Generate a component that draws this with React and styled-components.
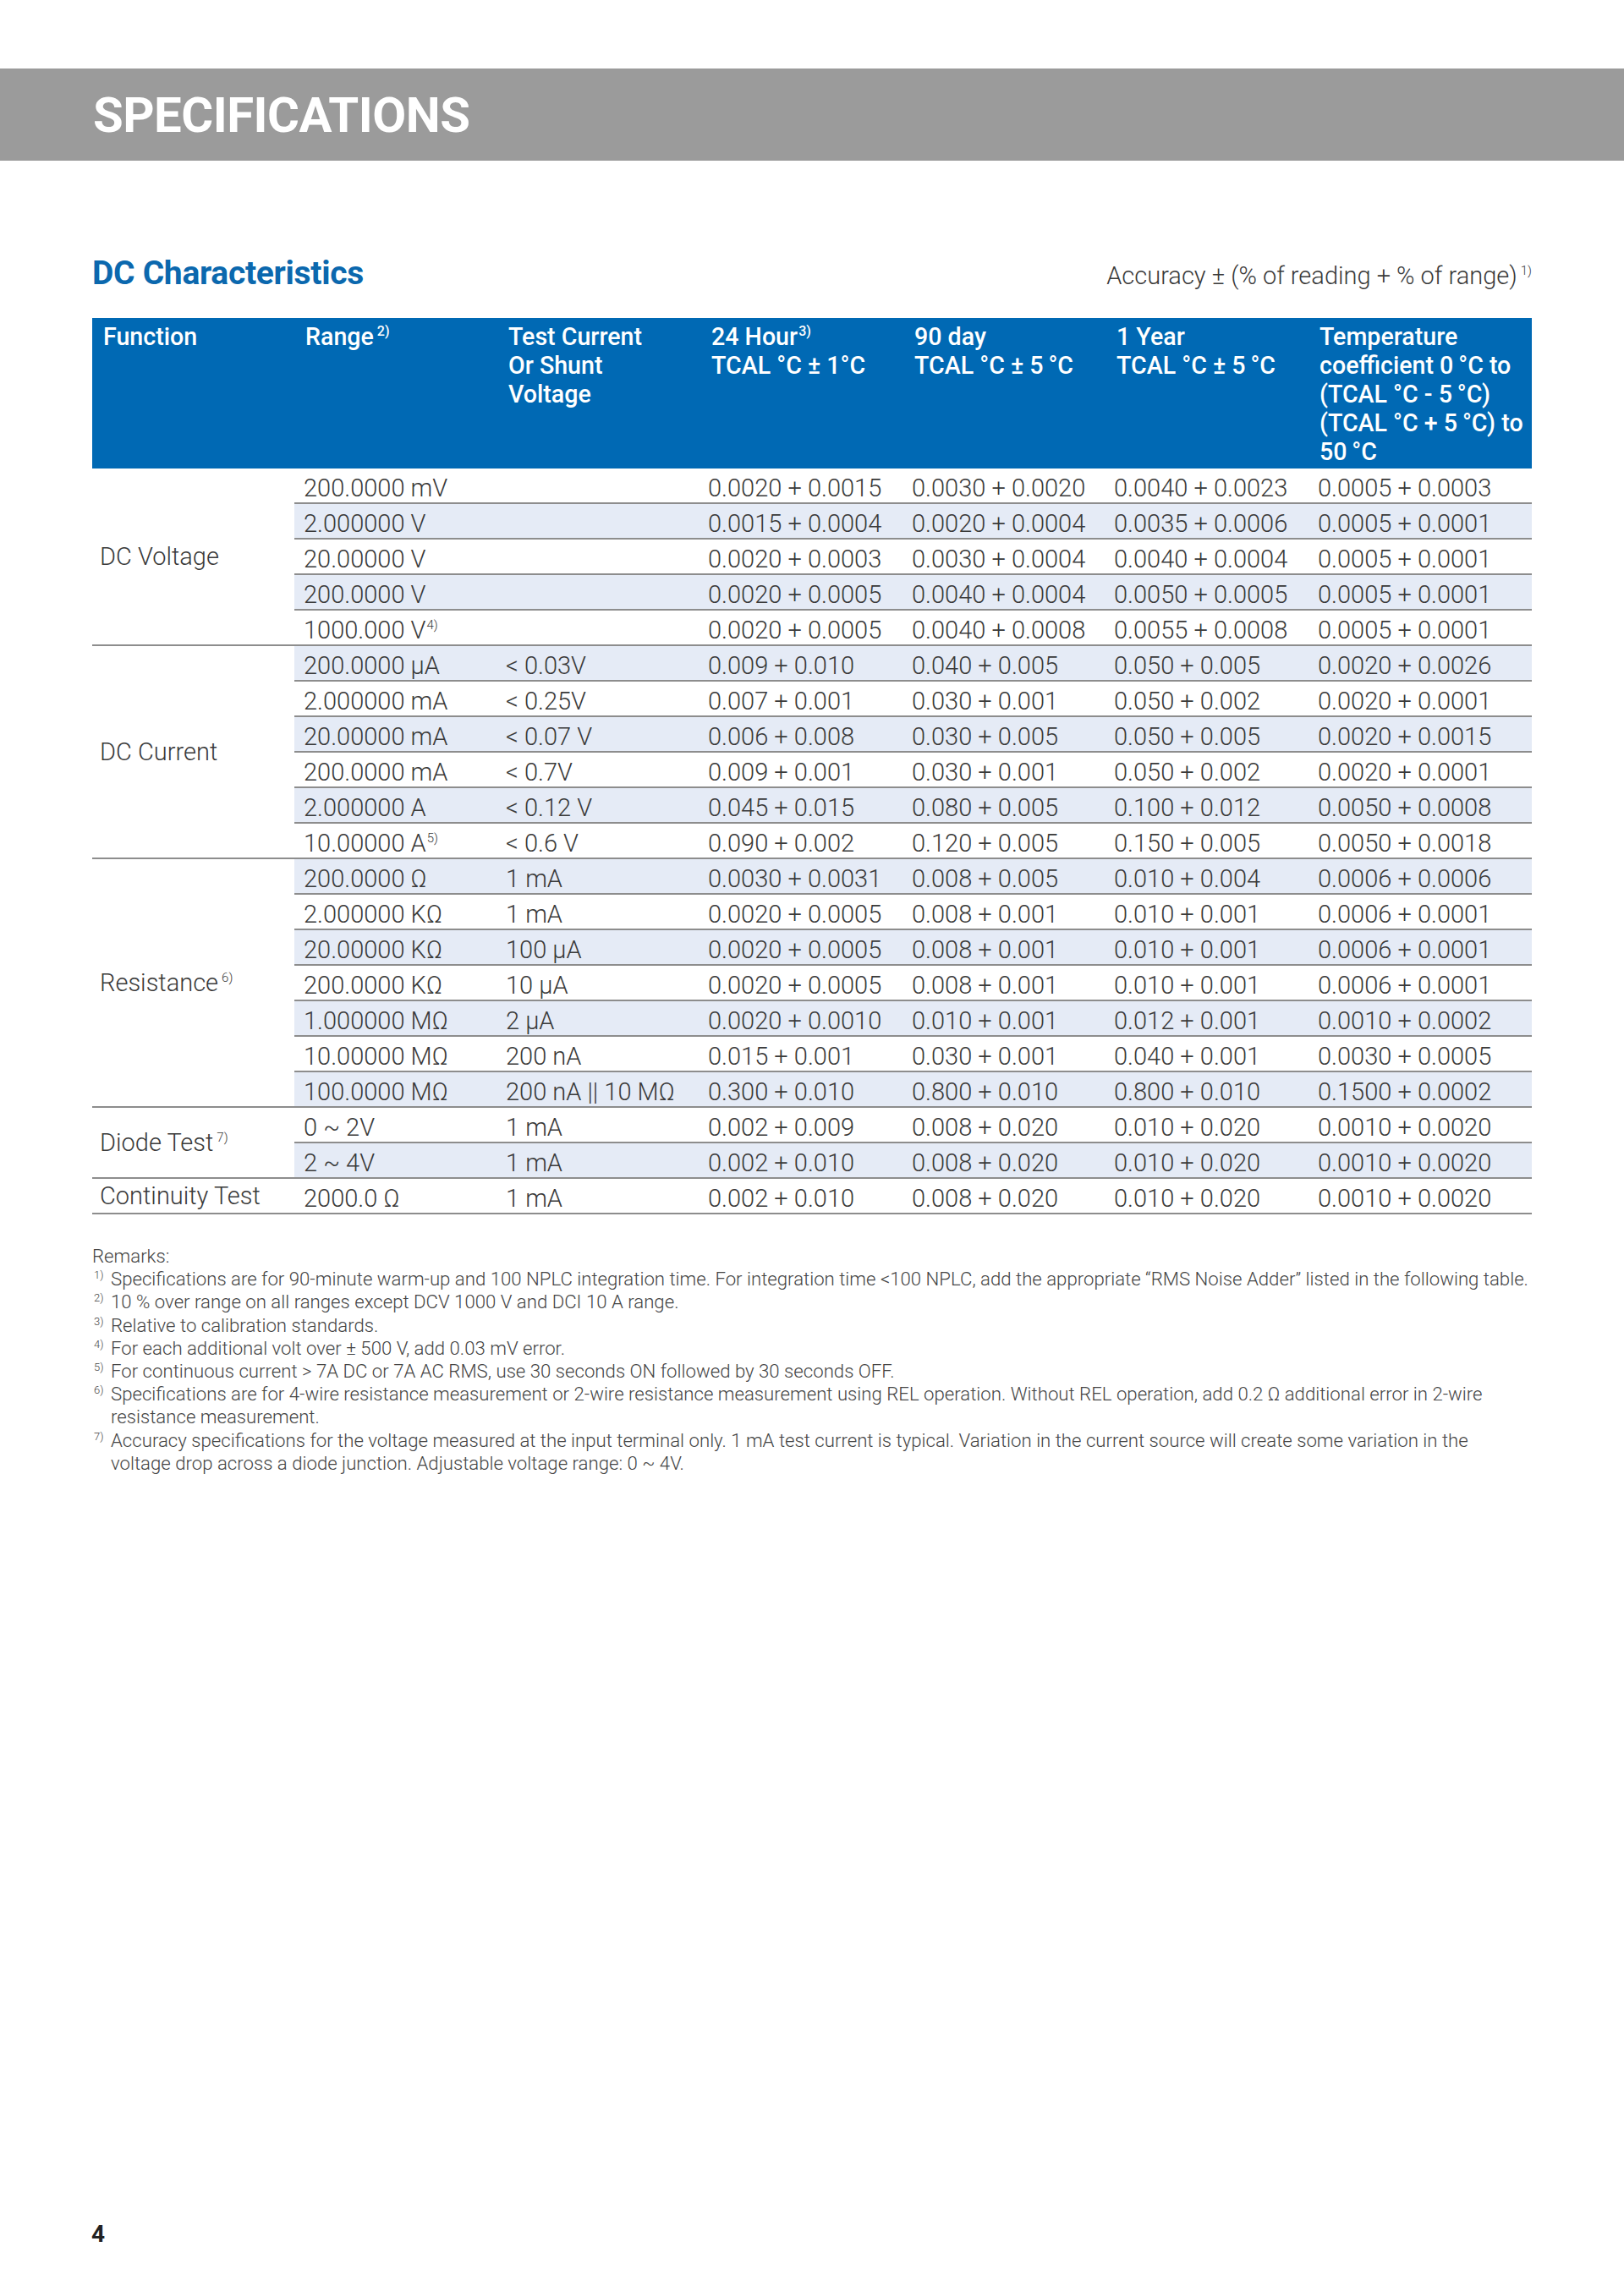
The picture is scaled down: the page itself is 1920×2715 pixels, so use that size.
import React from "react";
import styled, { createGlobalStyle } from "styled-components";

const GlobalStyle = createGlobalStyle`
  html, body { margin: 0; padding: 0; background: #ffffff; }
  body { font-family: Roboto, "Noto Sans", "Liberation Sans", sans-serif; }
  * { box-sizing: border-box; }
`;

const Page = styled.div`
  width: 1920px;
  min-height: 2715px;
  display: flex;
  flex-direction: column;
  padding-top: 81px;
  background: #fff;
`;

const Banner = styled.header`
  height: 109px;
  background: #9b9b9b;
  display: flex;
  align-items: center;
  padding-left: 110px;
`;

const BannerTitle = styled.h1`
  margin: 0;
  color: #ffffff;
  font-family: Roboto, sans-serif;
  font-weight: 700;
  font-size: 58px;
  letter-spacing: -0.5px;
  line-height: 1;
`;

const Content = styled.main`
  padding: 0 109px;
  display: flex;
  flex-direction: column;
`;

const TitleRow = styled.div`
  margin-top: 111px;
  display: flex;
  justify-content: space-between;
  align-items: baseline;
`;

const SectionTitle = styled.h2`
  margin: 0;
  color: #0b68ae;
  font-weight: 700;
  font-size: 39px;
  line-height: 44px;
  letter-spacing: -0.3px;
`;

const Accuracy = styled.div`
  color: #3a3a3a;
  font-weight: 300;
  font-size: 29px;
  line-height: 36px;
`;

const Sup = styled.sup`
  font-size: ${(p) => p.$size || 15}px;
  line-height: 0;
  vertical-align: ${(p) => p.$raise || 11}px;
  margin-left: ${(p) => (p.$gap ?? 3)}px;
`;

const Table = styled.div`
  margin-top: 31px;
  display: grid;
  grid-template-columns: 239px 240px 240px 240px 239px 240px 1fr;
  width: 1702px;
`;

const HeadCell = styled.div`
  background: #0069b4;
  color: #ffffff;
  font-weight: 500;
  font-size: 28.6px;
  line-height: 34px;
  padding: 5px 4px 3px ${(p) => p.$pad || 13}px;
  white-space: nowrap;
`;

const GroupLabel = styled.div`
  grid-column: 1;
  grid-row: span ${(p) => p.$span};
  display: flex;
  align-items: center;
  padding-left: 9px;
  border-bottom: 2px solid #8d8d8d;
  color: #3a3a3a;
  font-weight: 300;
  font-size: 29px;
  white-space: nowrap;
`;

const Cell = styled.div`
  height: 42px;
  padding: 5px 4px 0 ${(p) => p.$pad || 10}px;
  line-height: 36px;
  border-bottom: 2px solid #8d8d8d;
  background: ${(p) => (p.$striped ? "#e5ebf6" : "#ffffff")};
  color: #3a3a3a;
  font-weight: 300;
  font-size: 29px;
  white-space: nowrap;
`;

const Remarks = styled.section`
  margin-top: 36px;
  color: #454545;
  font-weight: 300;
  font-size: 22.2px;
  line-height: 27.2px;
`;

const RemarkTitle = styled.div``;

const RemarkItem = styled.div`
  display: flex;
  white-space: nowrap;
`;

const Marker = styled.span`
  flex: 0 0 22px;
  font-size: 13px;
  line-height: 18px;
  padding-left: 2px;
`;

const PageNumber = styled.div`
  margin-top: auto;
  padding: 0 0 56px 108px;
  font-weight: 700;
  font-size: 28px;
  line-height: 34px;
  color: #222;
`;

const T = (t, sup) => ({ t, sup });
const TS = "\u2009";

const groups = [
  {
    label: "DC Voltage",
    rows: [
      ["200.0000 mV", "", "0.0020 + 0.0015", "0.0030 + 0.0020", "0.0040 + 0.0023", "0.0005 + 0.0003"],
      ["2.000000 V", "", "0.0015 + 0.0004", "0.0020 + 0.0004", "0.0035 + 0.0006", "0.0005 + 0.0001"],
      ["20.00000 V", "", "0.0020 + 0.0003", "0.0030 + 0.0004", "0.0040 + 0.0004", "0.0005 + 0.0001"],
      ["200.0000 V", "", "0.0020 + 0.0005", "0.0040 + 0.0004", "0.0050 + 0.0005", "0.0005 + 0.0001"],
      [T("1000.000 V", "4)"), "", "0.0020 + 0.0005", "0.0040 + 0.0008", "0.0055 + 0.0008", "0.0005 + 0.0001"],
    ],
  },
  {
    label: "DC Current",
    rows: [
      ["200.0000 µA", "< 0.03V", "0.009 + 0.010", "0.040 + 0.005", "0.050 + 0.005", "0.0020 + 0.0026"],
      ["2.000000 mA", "< 0.25V", "0.007 + 0.001", "0.030 + 0.001", "0.050 + 0.002", "0.0020 + 0.0001"],
      ["20.00000 mA", "< 0.07 V", "0.006 + 0.008", "0.030 + 0.005", "0.050 + 0.005", "0.0020 + 0.0015"],
      ["200.0000 mA", "< 0.7V", "0.009 + 0.001", "0.030 + 0.001", "0.050 + 0.002", "0.0020 + 0.0001"],
      ["2.000000 A", "< 0.12 V", "0.045 + 0.015", "0.080 + 0.005", "0.100 + 0.012", "0.0050 + 0.0008"],
      [T("10.00000 A", "5)"), "< 0.6 V", "0.090 + 0.002", "0.120 + 0.005", "0.150 + 0.005", "0.0050 + 0.0018"],
    ],
  },
  {
    label: T("Resistance", "6)"),
    rows: [
      ["200.0000 Ω", "1 mA", "0.0030 + 0.0031", "0.008 + 0.005", "0.010 + 0.004", "0.0006 + 0.0006"],
      ["2.000000 KΩ", "1 mA", "0.0020 + 0.0005", "0.008 + 0.001", "0.010 + 0.001", "0.0006 + 0.0001"],
      ["20.00000 KΩ", "100 µA", "0.0020 + 0.0005", "0.008 + 0.001", "0.010 + 0.001", "0.0006 + 0.0001"],
      ["200.0000 KΩ", "10 µA", "0.0020 + 0.0005", "0.008 + 0.001", "0.010 + 0.001", "0.0006 + 0.0001"],
      ["1.000000 MΩ", "2 µA", "0.0020 + 0.0010", "0.010 + 0.001", "0.012 + 0.001", "0.0010 + 0.0002"],
      ["10.00000 MΩ", "200 nA", "0.015 + 0.001", "0.030 + 0.001", "0.040 + 0.001", "0.0030 + 0.0005"],
      ["100.0000 MΩ", "200 nA || 10 MΩ", "0.300 + 0.010", "0.800 + 0.010", "0.800 + 0.010", "0.1500 + 0.0002"],
    ],
  },
  {
    label: T("Diode Test", "7)"),
    rows: [
      ["0 ~ 2V", "1 mA", "0.002 + 0.009", "0.008 + 0.020", "0.010 + 0.020", "0.0010 + 0.0020"],
      ["2 ~ 4V", "1 mA", "0.002 + 0.010", "0.008 + 0.020", "0.010 + 0.020", "0.0010 + 0.0020"],
    ],
  },
  {
    label: "Continuity Test",
    rows: [["2000.0 Ω", "1 mA", "0.002 + 0.010", "0.008 + 0.020", "0.010 + 0.020", "0.0010 + 0.0020"]],
  },
];

const remarks = [
  ["1)", ["Specifications are for 90-minute warm-up and 100 NPLC integration time. For integration time <100 NPLC, add the appropriate “RMS Noise Adder” listed in the following table."]],
  ["2)", ["10 % over range on all ranges except DCV 1000 V and DCI 10 A range."]],
  ["3)", ["Relative to calibration standards."]],
  ["4)", ["For each additional volt over ± 500 V, add 0.03 mV error."]],
  ["5)", ["For continuous current > 7A DC or 7A AC RMS, use 30 seconds ON followed by 30 seconds OFF."]],
  ["6)", ["Specifications are for 4-wire resistance measurement or 2-wire resistance measurement using REL operation. Without REL operation, add 0.2 Ω additional error in 2-wire", "resistance measurement."]],
  ["7)", ["Accuracy specifications for the voltage measured at the input terminal only. 1 mA test current is typical. Variation in the current source will create some variation in the", "voltage drop across a diode junction. Adjustable voltage range: 0 ~ 4V."]],
];

const renderText = (v, supProps) =>
  typeof v === "string" ? (
    v
  ) : (
    <>
      {v.t}
      <Sup {...supProps}>{v.sup}</Sup>
    </>
  );

const pads = [11, 10, 9, 10, 10, 11];

export default function App() {
  let idx = 0;
  return (
    <>
      <GlobalStyle />
      <Page>
        <Banner>
          <BannerTitle>SPECIFICATIONS</BannerTitle>
        </Banner>
        <Content>
          <TitleRow>
            <SectionTitle>DC Characteristics</SectionTitle>
            <Accuracy>
              Accuracy ± (% of reading + % of range)
              <Sup $size={15} $gap={4}>1)</Sup>
            </Accuracy>
          </TitleRow>
          <Table>
            <HeadCell $pad={13}>Function</HeadCell>
            <HeadCell $pad={13}>
              Range<Sup $size={16} $gap={4}>2)</Sup>
            </HeadCell>
            <HeadCell $pad={13}>
              Test Current
              <br />
              Or Shunt
              <br />
              Voltage
            </HeadCell>
            <HeadCell $pad={13}>
              24 Hour<Sup $size={16} $gap={1}>3)</Sup>
              <br />
              TCAL °C ± 1°C
            </HeadCell>
            <HeadCell $pad={13}>
              90 day
              <br />
              {`TCAL °C ± 5${TS}°C`}
            </HeadCell>
            <HeadCell $pad={13}>
              1 Year
              <br />
              {`TCAL °C ± 5${TS}°C`}
            </HeadCell>
            <HeadCell $pad={13}>
              Temperature
              <br />
              {`coefficient 0${TS}°C to`}
              <br />
              {`(TCAL °C - 5${TS}°C)`}
              <br />
              {`(TCAL °C + 5${TS}°C) to`}
              <br />
              {`50${TS}°C`}
            </HeadCell>

            {groups.map((g, gi) => (
              <React.Fragment key={gi}>
                <GroupLabel $span={g.rows.length}>
                  <span>{renderText(g.label, { $size: 15, $gap: 4 })}</span>
                </GroupLabel>
                {g.rows.map((r, ri) => {
                  const striped = idx % 2 === 1;
                  idx += 1;
                  return r.map((c, ci) => (
                    <Cell
                      key={`${gi}-${ri}-${ci}`}
                      $striped={striped}
                      $pad={pads[ci]}
                      style={{ gridColumn: ci + 2 }}
                    >
                      {renderText(c, { $size: 15, $gap: 1 })}
                    </Cell>
                  ));
                })}
              </React.Fragment>
            ))}
          </Table>

          <Remarks>
            <RemarkTitle>Remarks:</RemarkTitle>
            {remarks.map(([m, lines]) => (
              <RemarkItem key={m}>
                <Marker>{m}</Marker>
                <div>
                  {lines.map((l, i) => (
                    <div key={i}>{l}</div>
                  ))}
                </div>
              </RemarkItem>
            ))}
          </Remarks>
        </Content>
        <PageNumber>4</PageNumber>
      </Page>
    </>
  );
}
